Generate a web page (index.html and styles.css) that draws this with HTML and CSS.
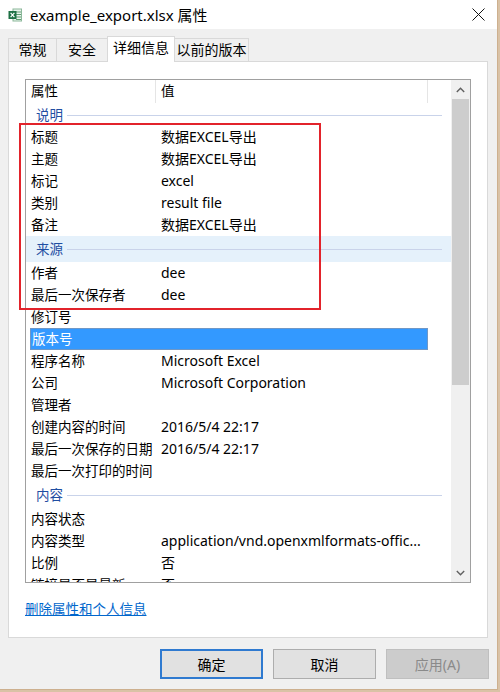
FILE: index.html
```html
<!DOCTYPE html>
<html lang="zh-CN">
<head>
<meta charset="utf-8">
<title>example_export.xlsx 属性</title>
<link rel="stylesheet" href="styles.css">
</head>
<body>
<div class="window">
  <div class="titlebar">
    <svg class="app-icon" width="14" height="14" viewBox="0 0 14 14">
      <rect x="5" y="1" width="8.5" height="12" fill="#e9f3ec" stroke="#8bb89a" stroke-width="1"/>
      <path d="M8 4h5M8 6.5h5M8 9h5M8 11.5h5" stroke="#5e9d72" stroke-width="1"/>
      <rect x="0.5" y="3" width="8" height="8" fill="#1e7145"/>
      <path d="M2.6 4.9l3.8 4.2M6.4 4.9l-3.8 4.2" stroke="#fff" stroke-width="1.2"/>
    </svg>
    <span class="title">example_export.xlsx 属性</span>
    <svg class="close" width="13" height="13" viewBox="0 0 13 13">
      <path d="M0.5 0.5l12 12M12.5 0.5l-12 12" stroke="#111" stroke-width="1"/>
    </svg>
  </div>

  <div class="content">
    <div class="tabs">
      <div class="tab tab-1">常规</div>
      <div class="tab tab-2">安全</div>
      <div class="tab tab-active">详细信息</div>
      <div class="tab tab-4">以前的版本</div>
    </div>

    <div class="panel">
      <div class="listbox">
        <div class="rows">
          <div class="header">
            <div class="hcell hcell-name">属性</div>
            <div class="hcell hcell-value">值</div>
            <div class="hcell hcell-rest"></div>
          </div>
          <div class="group group-first"><span>说明</span><i></i></div>
          <div class="row"><span>标题</span><span>数据EXCEL导出</span></div>
          <div class="row"><span>主题</span><span>数据EXCEL导出</span></div>
          <div class="row"><span>标记</span><span>excel</span></div>
          <div class="row"><span>类别</span><span>result file</span></div>
          <div class="row"><span>备注</span><span>数据EXCEL导出</span></div>
          <div class="group group-hover"><span>来源</span><i></i></div>
          <div class="row"><span>作者</span><span>dee</span></div>
          <div class="row"><span>最后一次保存者</span><span>dee</span></div>
          <div class="row"><span>修订号</span><span></span></div>
          <div class="row row-selected"><span>版本号</span><span></span></div>
          <div class="row"><span>程序名称</span><span>Microsoft Excel</span></div>
          <div class="row"><span>公司</span><span>Microsoft Corporation</span></div>
          <div class="row"><span>管理者</span><span></span></div>
          <div class="row"><span>创建内容的时间</span><span>2016/5/4 22:17</span></div>
          <div class="row"><span>最后一次保存的日期</span><span>2016/5/4 22:17</span></div>
          <div class="row"><span>最后一次打印的时间</span><span></span></div>
          <div class="group"><span>内容</span><i></i></div>
          <div class="row"><span>内容状态</span><span></span></div>
          <div class="row"><span>内容类型</span><span>application/vnd.openxmlformats-offic...</span></div>
          <div class="row"><span>比例</span><span>否</span></div>
          <div class="row"><span>链接是否是最新</span><span>否</span></div>
        </div>
        <div class="scrollbar">
          <div class="arrow">
            <svg width="9" height="6" viewBox="0 0 9 6"><path d="M0.8 5L4.5 1.3 8.2 5" fill="none" stroke="#606060" stroke-width="1.4"/></svg>
          </div>
          <div class="track"><div class="thumb"></div></div>
          <div class="arrow">
            <svg width="9" height="6" viewBox="0 0 9 6"><path d="M0.8 1L4.5 4.7 8.2 1" fill="none" stroke="#606060" stroke-width="1.4"/></svg>
          </div>
        </div>
      </div>
      <a class="link" href="#">删除属性和个人信息</a>
    </div>

    <div class="buttons">
      <div class="btn btn-default">确定</div>
      <div class="btn">取消</div>
      <div class="btn btn-disabled">应用(A)</div>
    </div>
  </div>

  <div class="annotation"></div>
</div>
</body>
</html>
```

FILE: styles.css
```css
* { box-sizing: border-box; }

body {
  margin: 0;
  background: #d9c2a6;
  font-family: "Noto Sans", "Noto Sans CJK SC", sans-serif;
  font-size: 13.5px;
  color: #000;
}

.window {
  position: relative;
  width: 498px;
  height: 690px;
  background: #f0f0f0;
  border-right: 1px solid #cdb08f;
  border-bottom: 1px solid #cdb08f;
  display: flex;
  flex-direction: column;
}

.titlebar {
  height: 29px;
  background: #fff;
  display: flex;
  align-items: center;
  padding: 0 12px 0 8px;
}

.app-icon { flex: none; }

.title {
  flex: 1;
  margin-left: 8px;
  font-size: 15px;
  line-height: 20px;
}

.close { flex: none; margin-top: -1px; }

.content {
  flex: 1;
  display: flex;
  flex-direction: column;
  padding: 7px 9px 0 8px;
}

.tabs {
  display: flex;
  align-items: flex-end;
  height: 25px;
  position: relative;
  z-index: 1;
  font-size: 14px;
}

.tab {
  height: 23px;
  border: 1px solid #d9d9d9;
  border-bottom: none;
  background: #f0f0f0;
  display: flex;
  align-items: center;
  justify-content: center;
  line-height: 20px;
  margin-right: -1px;
}

.tab-1 { width: 49px; }
.tab-2 { width: 52px; }
.tab-active {
  width: 68px;
  height: 26px;
  margin-bottom: -1px;
  background: #fff;
  padding-bottom: 3px;
  position: relative;
  z-index: 2;
}
.tab-4 { width: 75px; }

.panel {
  height: 577px;
  background: #fff;
  border: 1px solid #d9d9d9;
  padding: 17px 0 0 16px;
  display: flex;
  flex-direction: column;
}

.listbox {
  width: 446px;
  height: 504px;
  border: 1px solid #a0a0a0;
  display: flex;
  overflow: hidden;
}

.rows {
  flex: 1;
  overflow: hidden;
}

.header {
  display: flex;
  height: 23px;
}

.hcell {
  height: 23px;
  line-height: 23px;
  padding-left: 5px;
  border-right: 1px solid #e5e5e5;
}
.hcell-name { width: 130px; }
.hcell-value { width: 272px; }
.hcell-rest { flex: 1; border-right: none; }

.group {
  height: 26px;
  display: flex;
  align-items: center;
  padding: 0 9px 0 10px;
  color: #1f4ea2;
}
.group-first { height: 23px; }
.group-hover { background: #e5f1fb; }

.group span { line-height: 20px; }
.group i {
  flex: 1;
  height: 1px;
  background: #c9d3ea;
  margin-left: 4px;
  margin-top: 1px;
}

.row {
  display: grid;
  grid-template-columns: 130px 1fr;
  height: 22px;
  line-height: 22px;
  white-space: nowrap;
}

.row span {
  padding-left: 5px;
  overflow: hidden;
}

.row span + span {
  font-size: 14px;
}

.row-selected {
  margin-left: 4px;
  width: 398px;
  grid-template-columns: 126px 1fr;
  background: #3399ff;
  border: 1px solid #6f97c6;
  line-height: 20px;
  color: #fff;
}
.row-selected span { padding-left: 1px; }

.scrollbar {
  width: 19px;
  background: #f0f0f0;
  display: flex;
  flex-direction: column;
}

.arrow {
  height: 19px;
  display: flex;
  align-items: center;
  justify-content: center;
}

.track {
  flex: 1;
  padding: 0 1px;
}

.thumb {
  height: 286px;
  background: #cdcdcd;
}

.link {
  margin-top: 16px;
  align-self: flex-start;
  color: #0066cc;
  text-decoration: underline;
  line-height: 20px;
}

.buttons {
  display: flex;
  justify-content: flex-end;
  gap: 10px;
  margin-top: 11px;
  margin-right: -1px;
  font-size: 14px;
}

.btn {
  width: 103px;
  height: 30px;
  background: #e1e1e1;
  border: 1px solid #adadad;
  display: flex;
  align-items: center;
  justify-content: center;
}

.btn-default {
  border: 2px solid #2f7ad0;
}

.btn-disabled {
  background: #cccccc;
  border-color: #bfbfbf;
  color: #8a8a8a;
}

.annotation {
  position: absolute;
  left: 19px;
  top: 123px;
  width: 302px;
  height: 187px;
  border: 2px solid #e2232b;
  pointer-events: none;
}
```
